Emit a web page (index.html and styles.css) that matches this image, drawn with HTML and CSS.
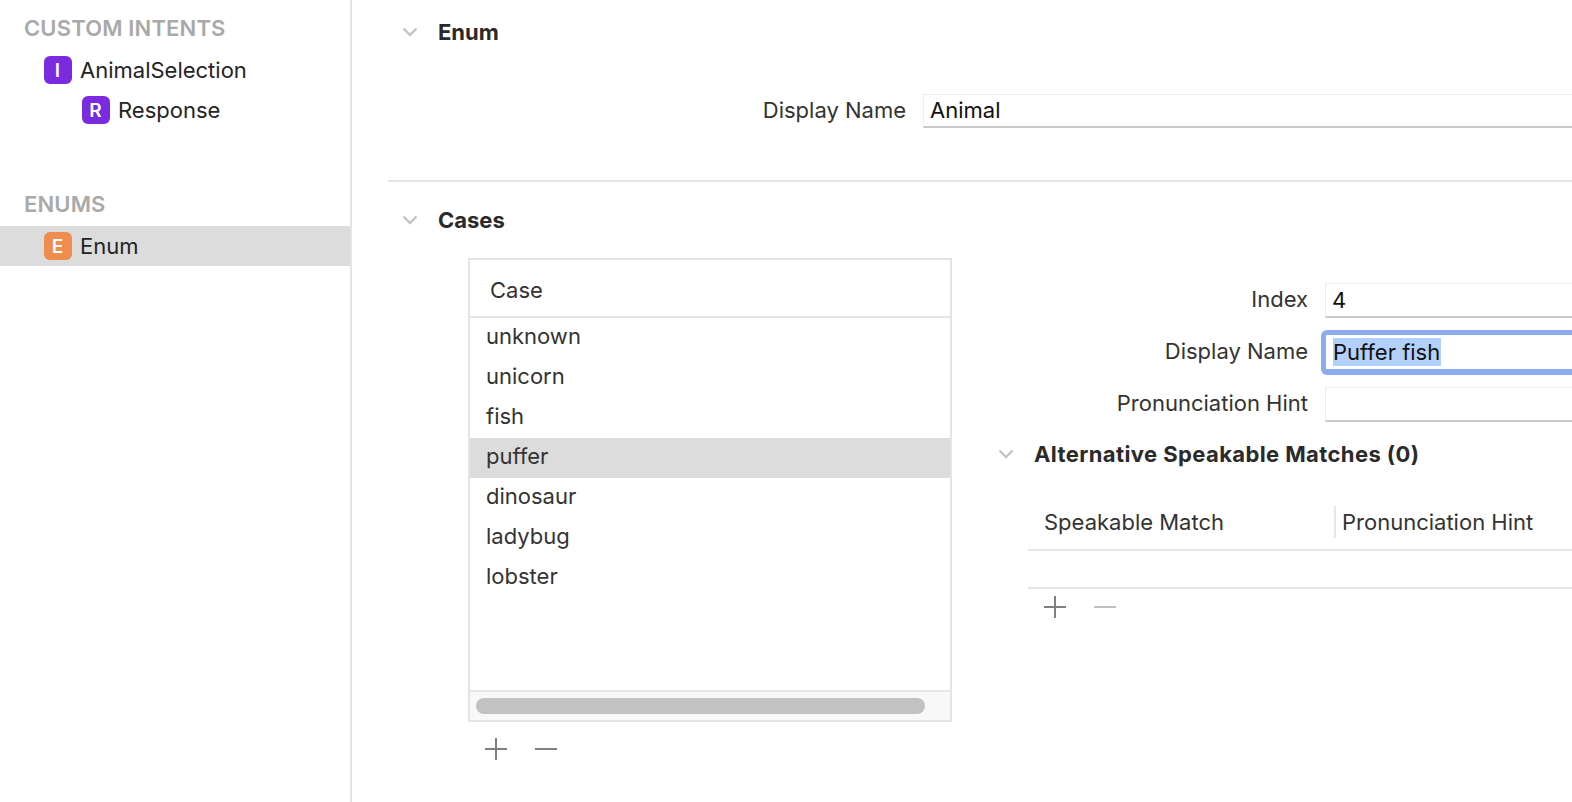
FILE: index.html
```html
<!DOCTYPE html>
<html lang="en">
<head>
  <meta charset="UTF-8">
  <title>Intent definition: Enum</title>
  <link rel="stylesheet" href="styles.css">
</head>
<body>
  <div class="app">
    <aside class="sidebar">
      <h2 class="side-title">CUSTOM INTENTS</h2>
      <div class="side-row"><span class="badge purple">I</span>AnimalSelection</div>
      <div class="side-row child"><span class="badge purple">R</span>Response</div>
      <h2 class="side-title second">ENUMS</h2>
      <div class="side-row selected"><span class="badge orange">E</span>Enum</div>
    </aside>

    <main class="main">
      <section class="enum-section">
        <h3 class="section-head">
          <svg class="chevron" viewBox="0 0 16 10"><path d="M1.5 1.5 8 8l6.500-6.500"/></svg>
          Enum
        </h3>
        <div class="form-row enum-name">
          <label class="form-label">Display Name</label>
          <div class="field">Animal</div>
        </div>
      </section>

      <section class="cases-section">
        <h3 class="section-head">
          <svg class="chevron" viewBox="0 0 16 10"><path d="M1.5 1.5 8 8l6.500-6.500"/></svg>
          Cases
        </h3>
        <div class="cases-body">
          <div class="cases-left">
            <div class="case-table">
              <div class="case-head">Case</div>
              <ul class="case-list">
                <li>unknown</li>
                <li>unicorn</li>
                <li>fish</li>
                <li class="selected">puffer</li>
                <li>dinosaur</li>
                <li>ladybug</li>
                <li>lobster</li>
              </ul>
              <div class="scrollbar"><div class="thumb"></div></div>
            </div>
            <div class="buttons case-buttons">
              <svg class="tool" viewBox="0 0 22 22"><path d="M0 11h22M11 0v22"/></svg>
              <svg class="tool" viewBox="0 0 22 22"><path d="M0 11h22"/></svg>
            </div>
          </div>

          <div class="detail">
            <div class="form-row">
              <label class="form-label">Index</label>
              <div class="field value">4</div>
            </div>
            <div class="form-row focused-row">
              <label class="form-label">Display Name</label>
              <div class="field focused"><span class="selection">Puffer fish</span></div>
            </div>
            <div class="form-row">
              <label class="form-label">Pronunciation Hint</label>
              <div class="field"></div>
            </div>

            <h3 class="section-head alt-head">
              <svg class="chevron" viewBox="0 0 16 10"><path d="M1.5 1.5 8 8l6.500-6.500"/></svg>
              Alternative Speakable Matches (0)
            </h3>
            <div class="alt-table">
              <div class="alt-head-row">
                <div class="alt-col first">Speakable Match</div>
                <div class="alt-col">Pronunciation Hint</div>
              </div>
              <div class="alt-empty"></div>
            </div>
            <div class="buttons alt-buttons">
              <svg class="tool" viewBox="0 0 22 22"><path d="M0 11h22M11 0v22"/></svg>
              <svg class="tool off" viewBox="0 0 22 22"><path d="M0 11h22"/></svg>
            </div>
          </div>
        </div>
      </section>
    </main>
  </div>
</body>
</html>
```

FILE: styles.css
```css
html, body { margin: 0; height: 100%; overflow: hidden; background: #fff; }
body { font-family: Inter, "Noto Sans", sans-serif; font-size: 22px; color: #242424; }
h2, h3, ul { margin: 0; padding: 0; }

.app { display: flex; height: 802px; }

/* sidebar */
.sidebar { width: 350px; flex: none; padding-top: 14px; border-right: 2px solid #e4e4e4; box-sizing: content-box; }
.side-title { font-size: 22px; line-height: 28px; font-weight: 600; letter-spacing: 0.15px; color: #a9a9a9; padding-left: 24px; margin-bottom: 8px; }
.side-title.second { margin-top: 60px; }
.side-row { display: flex; align-items: center; height: 40px; padding-left: 44px; gap: 8px; }
.side-row.child { padding-left: 82px; }
.side-row.selected { background: #dcdcdc; }
.badge { width: 28px; height: 28px; border-radius: 6px; color: #fff; font-size: 19px; font-weight: 600; display: flex; align-items: center; justify-content: center; padding-right: 1px; box-sizing: border-box; }
.badge.purple { background: #7a2be0; }
.badge.orange { background: #ef8d4e; }

/* main column */
.main { flex: 1; min-width: 0; padding-left: 36px; overflow: hidden; }
.section-head { display: flex; align-items: center; height: 28px; font-size: 22px; font-weight: 700; color: #2a2a2a; }
.chevron { width: 16px; height: 10px; margin-left: 14px; margin-right: 20px; fill: none; stroke: #c4c4c4; stroke-width: 2.4; }

.enum-section { padding-top: 18px; height: 162px; border-bottom: 2px solid #e6e6e6; box-sizing: content-box; }
.form-row { display: flex; align-items: center; height: 34px; }
.form-label { text-align: right; color: #333; padding-bottom: 3px; }
.enum-name { margin-top: 48px; }
.enum-name .form-label { width: 518px; }
.enum-name .field { line-height: 31px; }
.field { flex: 1; margin-left: 17px; height: 34px; line-height: 32px; box-sizing: border-box; padding-left: 6px; background: #fff; border: 1px solid #eee; border-bottom: 2px solid #c9c9c9; border-right: 0; color: #111; }

.cases-section { padding-top: 24px; }
.cases-body { display: flex; margin-top: 24px; }
.cases-left { width: 484px; margin-left: 80px; flex: none; }

.case-table { border: 2px solid #e4e4e4; height: 464px; box-sizing: border-box; display: flex; flex-direction: column; }
.case-head { height: 56px; line-height: 60px; padding-left: 20px; border-bottom: 2px solid #e4e4e4; flex: none; color: #333; }
.case-list { list-style: none; flex: 1; }
.case-list li { height: 40px; line-height: 36px; padding-left: 16px; color: #333; }
.case-list li.selected { background: #dcdcdc; }
.scrollbar { height: 30px; padding: 6px 25px 0 6px; box-sizing: border-box; background: #f8f8f8; border-top: 2px solid #e6e6e6; flex: none; }
.thumb { height: 16px; border-radius: 8px; background: #c2c2c2; }

.buttons { display: flex; gap: 28px; }
.tool { width: 22px; height: 22px; fill: none; stroke: #808080; stroke-width: 2; }
.tool.off { stroke: #c0c0c0; }
.case-buttons { margin-top: 16px; padding-left: 17px; }

/* case details */
.detail { flex: 1; min-width: 0; margin-left: 39px; padding-top: 25px; }
.detail .form-label { width: 317px; flex: none; }
.detail .form-row { height: 35px; margin-bottom: 18px; }
.detail .field { height: 35px; }
.detail .form-row.focused-row { margin-top: -6px; margin-bottom: 12px; height: 45px; }
.detail .field.focused { height: 45px; margin-left: 13px; padding: 3px 0 0 7px; line-height: 28px; border: 5px solid #8fabf0; border-bottom-width: 6px; border-right: 0; border-radius: 6px 0 0 6px; }
.selection { display: inline-block; background: #b3d0fb; height: 28px; line-height: 28px; color: #111; padding-right: 1px; vertical-align: top; }

.alt-head { margin-top: 18px; letter-spacing: 0.4px; }
.alt-head .chevron { margin-left: 7px; margin-right: 20px; }
.alt-table { margin-left: 37px; margin-top: 38px; }
.alt-head-row { display: flex; align-items: center; height: 32px; padding-bottom: 11px; border-bottom: 2px solid #e6e6e6; }
.alt-col.first { width: 290px; padding-left: 16px; border-right: 2px solid #e6e6e6; margin-right: 6px; line-height: 32px; }
.alt-col { color: #333; flex: none; }
.alt-empty { height: 36px; border-bottom: 2px solid #e6e6e6; }
.alt-buttons { margin: 7px 0 0 53px; }
```
